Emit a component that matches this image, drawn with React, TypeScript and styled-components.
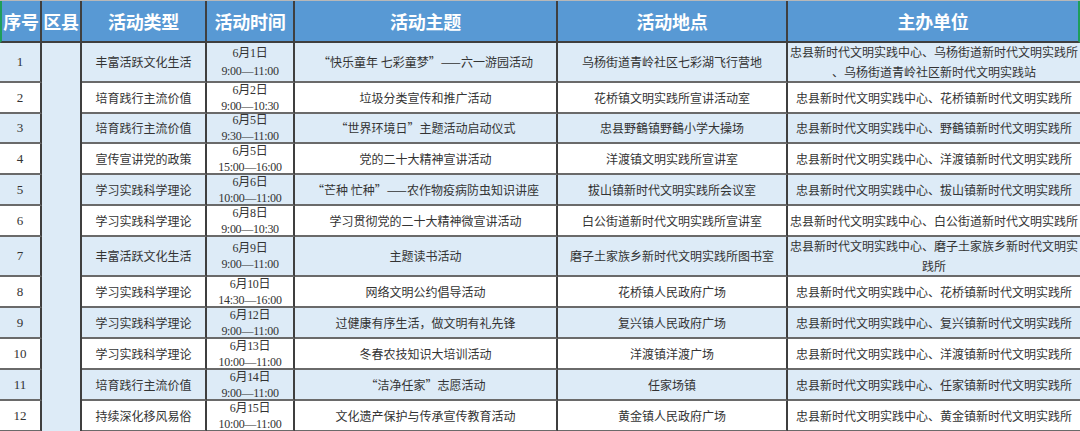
import React from "react";
import styled, { createGlobalStyle } from "styled-components";

const GlobalStyle = createGlobalStyle`
  html, body { margin: 0; padding: 0; background: #ffffff; }
  body { font-family: "Noto Sans CJK SC", "Noto Sans", sans-serif; color: #333333; }
  #root { width: 1080px; height: 431px; overflow: hidden; }
`;

const HEADER_BLUE = "#5899d4";
const ROW_BLUE = "#ddebf7";
const V_LINE = "#3f3f3f";
const H_LINE = "#6a6a6a";
const EDGE_GREEN = "#1f9e5a";

const Sheet = styled.div`
  display: grid;
  grid-template-columns: 42px 40px 125px 88px 263px 230px 292px;
  grid-template-rows: 42px 40px 31px 30px 31px 31px 31px 40px repeat(5, 31px);
  width: 1080px;
  height: 431px;
  overflow: hidden;
  border-top: 1px solid #b8b8b8;
  box-sizing: border-box;
`;

const HeadCell = styled.div<{ $first?: boolean; $last?: boolean }>`
  box-sizing: border-box;
  display: flex;
  align-items: center;
  justify-content: center;
  background: ${HEADER_BLUE};
  color: #ffffff;
  font-family: "Noto Sans CJK SC", sans-serif;
  font-weight: 700;
  font-size: 18px;
  letter-spacing: -0.3px;
  white-space: nowrap;
  border-bottom: 2px solid ${V_LINE};
  border-right: 2px solid ${(p) => (p.$last ? EDGE_GREEN : V_LINE)};
  border-left: ${(p) => (p.$first ? `2px solid ${EDGE_GREEN}` : "none")};
`;

const Cell = styled.div<{ $blue: boolean; $last?: boolean }>`
  box-sizing: border-box;
  display: flex;
  flex-direction: column;
  align-items: center;
  justify-content: center;
  background: ${(p) => (p.$blue ? ROW_BLUE : "#ffffff")};
  border-bottom: 2px solid ${H_LINE};
  border-right: ${(p) => (p.$last ? "none" : `2px solid ${V_LINE}`)};
  font-family: "Noto Sans CJK SC", sans-serif;
  font-size: 12px;
  line-height: 20px;
  color: #333333;
  white-space: nowrap;
  text-align: center;
  overflow: visible;
`;

const NumCell = styled(Cell)`
  font-family: "Liberation Serif", serif;
  font-size: 13px;
`;

const DateCell = styled(Cell)<{ $tall?: boolean }>`
  font-family: "Liberation Serif", "Noto Sans CJK SC", serif;
  font-size: 12px;
  letter-spacing: -0.3px;
  line-height: ${(p) => (p.$tall ? "18px" : "16px")};
`;

const CountyCell = styled.div`
  box-sizing: border-box;
  grid-column: 2;
  grid-row: 2 / span 12;
  background: ${ROW_BLUE};
  border-right: 2px solid ${V_LINE};
`;

const Line = styled.span`
  display: block;
`;

type Row = {
  no: string;
  type: string;
  date: string;
  time: string;
  topic: string;
  place: string;
  org: string[];
};

const rows: Row[] = [
  {
    no: "1",
    type: "丰富活跃文化生活",
    date: "6月1日",
    time: "9:00—11:00",
    topic: "“快乐童年 七彩童梦”——六一游园活动",
    place: "乌杨街道青岭社区七彩湖飞行营地",
    org: ["忠县新时代文明实践中心、乌杨街道新时代文明实践所", "、乌杨街道青岭社区新时代文明实践站"],
  },
  {
    no: "2",
    type: "培育践行主流价值",
    date: "6月2日",
    time: "9:00—10:30",
    topic: "垃圾分类宣传和推广活动",
    place: "花桥镇文明实践所宣讲活动室",
    org: ["忠县新时代文明实践中心、花桥镇新时代文明实践所"],
  },
  {
    no: "3",
    type: "培育践行主流价值",
    date: "6月5日",
    time: "9:30—11:00",
    topic: "“世界环境日”主题活动启动仪式",
    place: "忠县野鶴镇野鶴小学大操场",
    org: ["忠县新时代文明实践中心、野鶴镇新时代文明实践所"],
  },
  {
    no: "4",
    type: "宣传宣讲党的政策",
    date: "6月5日",
    time: "15:00—16:00",
    topic: "党的二十大精神宣讲活动",
    place: "洋渡镇文明实践所宣讲室",
    org: ["忠县新时代文明实践中心、洋渡镇新时代文明实践所"],
  },
  {
    no: "5",
    type: "学习实践科学理论",
    date: "6月6日",
    time: "10:00—11:00",
    topic: "“芒种 忙种”——农作物疫病防虫知识讲座",
    place: "拔山镇新时代文明实践所会议室",
    org: ["忠县新时代文明实践中心、拔山镇新时代文明实践所"],
  },
  {
    no: "6",
    type: "学习实践科学理论",
    date: "6月8日",
    time: "9:00—10:30",
    topic: "学习贯彻党的二十大精神微宣讲活动",
    place: "白公街道新时代文明实践所宣讲室",
    org: ["忠县新时代文明实践中心、白公街道新时代文明实践所"],
  },
  {
    no: "7",
    type: "丰富活跃文化生活",
    date: "6月9日",
    time: "9:00—11:00",
    topic: "主题读书活动",
    place: "磨子土家族乡新时代文明实践所图书室",
    org: ["忠县新时代文明实践中心、磨子土家族乡新时代文明实", "践所"],
  },
  {
    no: "8",
    type: "学习实践科学理论",
    date: "6月10日",
    time: "14:30—16:00",
    topic: "网络文明公约倡导活动",
    place: "花桥镇人民政府广场",
    org: ["忠县新时代文明实践中心、花桥镇新时代文明实践所"],
  },
  {
    no: "9",
    type: "学习实践科学理论",
    date: "6月12日",
    time: "9:00—11:00",
    topic: "过健康有序生活，做文明有礼先锋",
    place: "复兴镇人民政府广场",
    org: ["忠县新时代文明实践中心、复兴镇新时代文明实践所"],
  },
  {
    no: "10",
    type: "学习实践科学理论",
    date: "6月13日",
    time: "10:00—11:00",
    topic: "冬春农技知识大培训活动",
    place: "洋渡镇洋渡广场",
    org: ["忠县新时代文明实践中心、洋渡镇新时代文明实践所"],
  },
  {
    no: "11",
    type: "培育践行主流价值",
    date: "6月14日",
    time: "9:00—11:00",
    topic: "“洁净任家”志愿活动",
    place: "任家场镇",
    org: ["忠县新时代文明实践中心、任家镇新时代文明实践所"],
  },
  {
    no: "12",
    type: "持续深化移风易俗",
    date: "6月15日",
    time: "10:00—11:00",
    topic: "文化遗产保护与传承宣传教育活动",
    place: "黄金镇人民政府广场",
    org: ["忠县新时代文明实践中心、黄金镇新时代文明实践所"],
  },
];

const headers = ["序号", "区县", "活动类型", "活动时间", "活动主题", "活动地点", "主办单位"];

export default function App() {
  return (
    <>
      <GlobalStyle />
      <Sheet>
        {headers.map((h, i) => (
          <HeadCell key={h} $first={i === 0} $last={i === headers.length - 1}>
            {h}
          </HeadCell>
        ))}
        <CountyCell />
        {rows.map((r, i) => {
          const blue = i % 2 === 0;
          return (
            <React.Fragment key={r.no}>
              <NumCell $blue={blue}>{r.no}</NumCell>
              <Cell $blue={blue}>{r.type}</Cell>
              <DateCell $blue={blue} $tall={i === 0}>
                <Line>{r.date}</Line>
                <Line>{r.time}</Line>
              </DateCell>
              <Cell $blue={blue}>{r.topic}</Cell>
              <Cell $blue={blue}>{r.place}</Cell>
              <Cell $blue={blue} $last>
                {r.org.map((l) => (
                  <Line key={l}>{l}</Line>
                ))}
              </Cell>
            </React.Fragment>
          );
        })}
      </Sheet>
    </>
  );
}
